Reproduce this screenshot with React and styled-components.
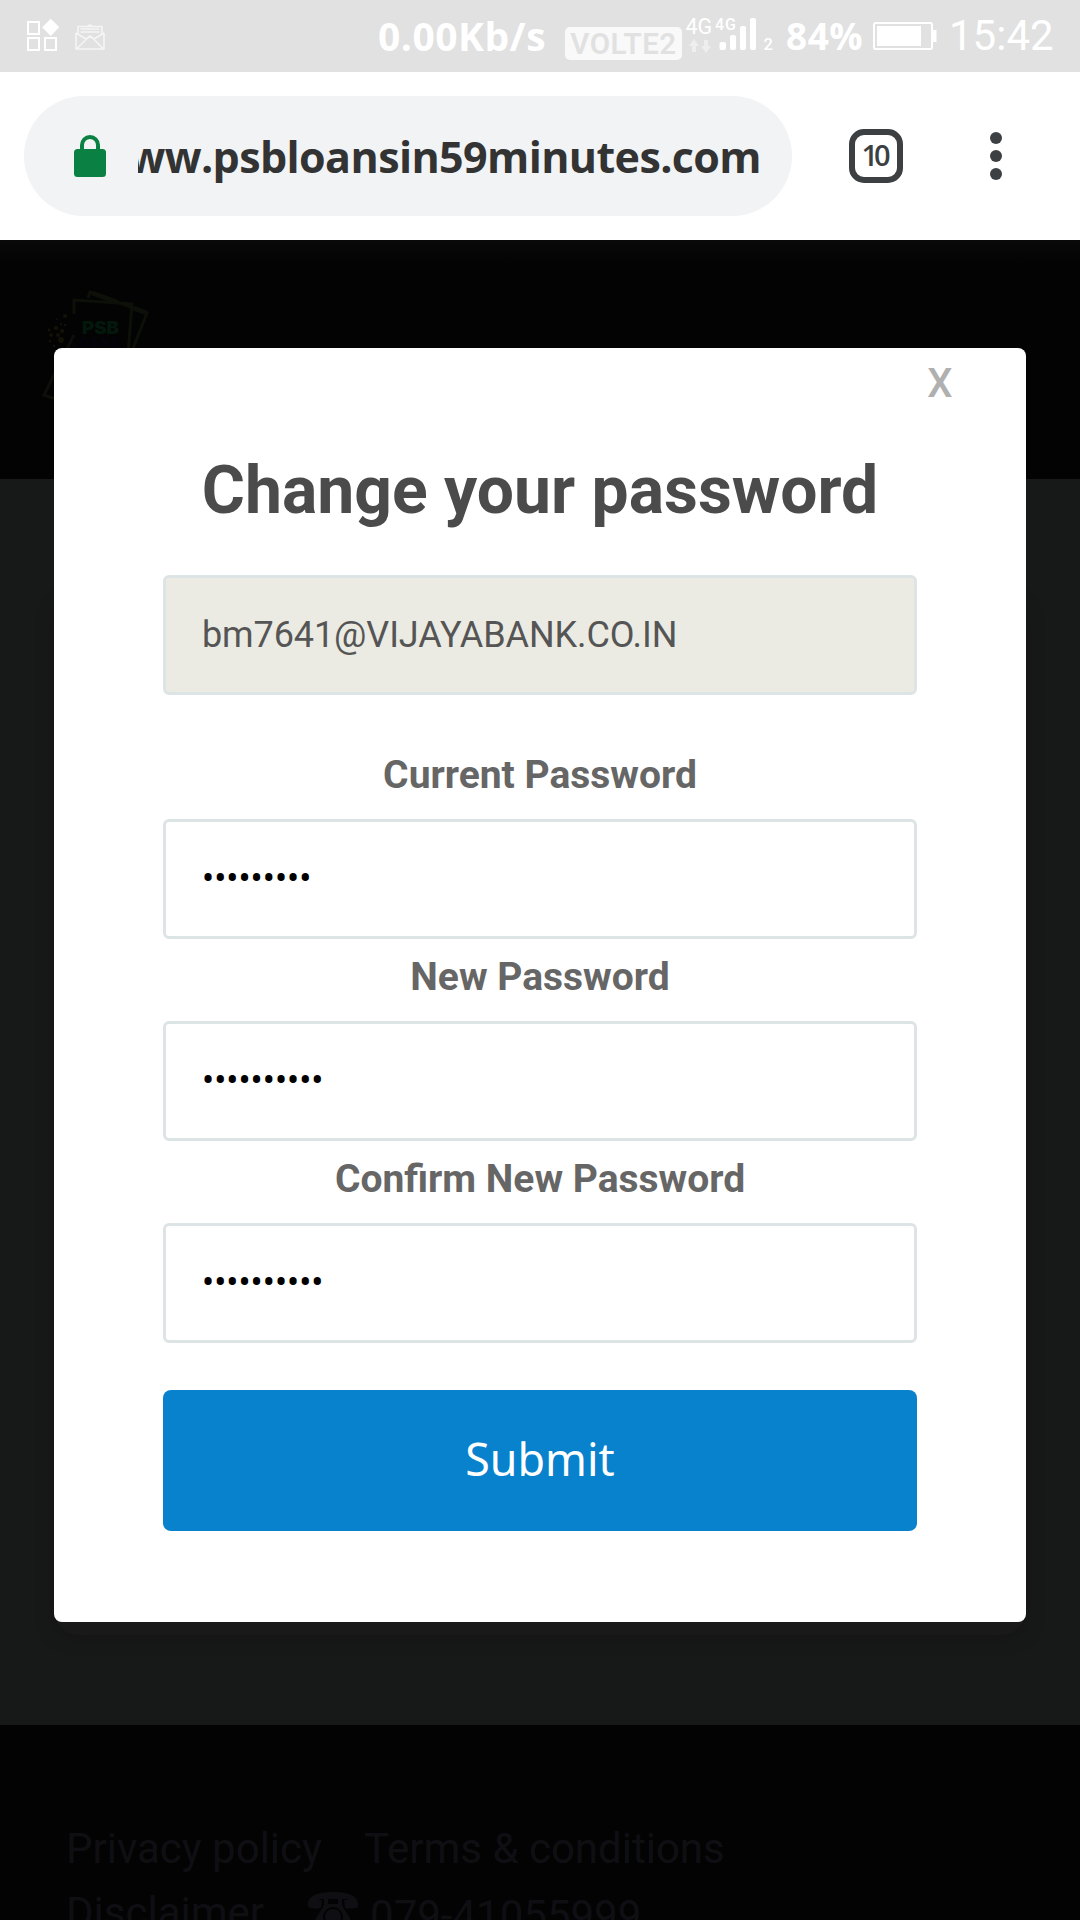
import React from 'react';
import styled, { createGlobalStyle } from 'styled-components';

const GlobalStyle = createGlobalStyle`
  * { box-sizing: border-box; }
  body { margin: 0; background: #030303; font-family: Roboto, sans-serif; }
  svg { overflow: visible; flex: none; }
`;

const Screen = styled.div`
  width: 1080px;
  height: 1920px;
  display: flex;
  flex-direction: column;
  overflow: hidden;
`;

/* status bar */
const StatusBar = styled.header`
  flex: none;
  height: 72px;
  background: #e1e1e1;
  color: #fff;
  display: flex;
  align-items: center;
  justify-content: space-between;
  padding: 0 25px 0 26px;
`;
const StatusGroup = styled.div`
  display: flex;
  align-items: center;
  height: 72px;
`;
const StatusText = styled.span`
  font: 700 ${(p) => p.$size}px/1 'Open Sans', sans-serif;
  letter-spacing: 0.5px;
  width: ${(p) => p.$width}px;
  margin-left: ${(p) => p.$before || 0}px;
  padding-bottom: 2px;
  white-space: nowrap;
`;
const Badge = styled.span`
  width: 117px;
  height: 33px;
  margin: 15px 3px 0 0;
  border-radius: 5px;
  background: #f9f9f9;
  color: #e1e1e1;
  font-size: 29.5px;
  font-weight: 600;
  line-height: 34px;
  text-align: center;
  letter-spacing: 0.5px;
`;
const Clock = styled.span`
  width: 106px;
  margin-left: 11px;
  font-size: 42px;
  line-height: 76px;
  white-space: nowrap;
`;

/* browser bar */
const BrowserBar = styled.div`
  flex: none;
  height: 168px;
  background: #fff;
  display: flex;
  align-items: center;
  padding: 0 78px 0 24px;
`;
const AddressPill = styled.div`
  width: 768px;
  height: 120px;
  border-radius: 60px;
  background: #f1f3f5;
  display: flex;
  align-items: center;
  padding: 0 31px 0 50px;
`;
const UrlText = styled.div`
  flex: 1;
  height: 64px;
  margin-left: 32px;
  display: flex;
  justify-content: flex-end;
  overflow: hidden;
  color: #333;
  font: 700 43px/65px 'Open Sans', sans-serif;
  letter-spacing: -0.6px;
  white-space: nowrap;
`;
const TabCount = styled.div`
  width: 54px;
  height: 54px;
  margin-left: 57px;
  border: 6px solid #3c4043;
  border-radius: 15px;
  color: #3c4043;
  font: 600 29px/39px 'Open Sans', sans-serif;
  letter-spacing: -4px;
  text-indent: -4px;
  text-align: center;
`;
const MenuDots = styled.div`
  display: flex;
  flex-direction: column;
  gap: 6px;
  margin-left: auto;
`;
const Dot = styled.i`
  width: 12px;
  height: 12px;
  border-radius: 50%;
  background: #3c4043;
`;

/* dimmed page */
const Page = styled.main`
  position: relative;
  flex: 1;
  min-height: 0;
  display: flex;
  flex-direction: column;
`;
const PageHeader = styled.div`
  flex: none;
  height: 239px;
  padding: 48px 0 0 40px;
  background: linear-gradient(#090909, #030303 24px);
`;
const PageBody = styled.div`
  flex: none;
  height: 1246px;
  padding: 120px 54px 90px;
  background: #171918;
`;
const PageCard = styled.div`
  height: 100%;
  border-radius: 24px;
  background: #191919;
  box-shadow: 0 2px 12px 6px #161616;
`;
const PageFooter = styled.footer`
  flex: 1;
  min-height: 0;
  overflow: hidden;
  padding: 92px 0 0 66px;
  background: #030303;
  color: #0f0f13;
  font-size: 42px;
  line-height: 64px;
`;
const FooterRow = styled.div`
  display: flex;
  height: 64px;
  gap: ${(p) => p.$gap}px;
`;
const Phone = styled.span`
  display: flex;
  gap: 12px;
  padding-top: 3px;

  svg { margin-top: 8px; }
`;

/* dialog */
const Dialog = styled.section`
  position: absolute;
  top: 108px;
  left: 54px;
  width: 972px;
  height: 1274px;
  padding: 11px 109px 0;
  border-radius: 8px;
  background: #fff;
`;
const CloseButton = styled.button`
  display: block;
  margin: 0 -38px 0 auto;
  padding: 0;
  width: 30px;
  height: 50px;
  border: 0;
  background: none;
  color: #b0b0b0;
  font: 500 40px/50px Roboto, sans-serif;
`;
const Title = styled.h1`
  margin: 42px -40px 44px;
  color: #4b4b4b;
  font-size: 66px;
  font-weight: 700;
  line-height: 80px;
  text-align: center;
`;
const Label = styled.label`
  display: block;
  margin: ${(p) => p.$top}px 0 20px;
  color: #666;
  font-size: 39px;
  font-weight: 700;
  line-height: 48px;
  text-align: center;
`;
const Field = styled.input`
  display: block;
  width: 754px;
  height: 120px;
  padding: 0 36px 1px;
  border: 3px solid #dde4e6;
  border-radius: 6px;
  outline: 0;
  background: ${(p) => (p.disabled ? '#ebebe3' : '#fff')};
  color: ${(p) => (p.disabled ? '#555' : '#000')};
  font: 400 36px Roboto, sans-serif;
  letter-spacing: ${(p) => (p.disabled ? '-0.1px' : '0')};
`;
const Submit = styled.button`
  display: block;
  width: 754px;
  height: 141px;
  margin-top: 47px;
  padding: 0 0 3px;
  border: 0;
  border-radius: 8px;
  background: #0882cc;
  color: #fff;
  font: 400 44.8px/1 'Noto Sans', sans-serif;
`;

const NotificationIcons = () => (
  <svg width="82" height="36" viewBox="26 18 82 36" fill="none">
    <g stroke="#fff" strokeWidth="2">
      <path d="M28 22h11v12H28zM28 38h11v12H28zM45 38h11v12H45z" />
    </g>
    <path d="M50.7 18.8 59.3 27.3 50.7 36 42.2 27.3z" fill="#fff" />
    <g stroke="#f5f5f5" strokeWidth="1.6" strokeLinejoin="round">
      <path d="M78 35V26.500h24V35M76 33v16h28V33M76 33l10 6 4-3 4 3 10-6M76.500 49 87 38.500M103.500 49 93 38.500M80.500 29h19M80.500 32h19M88 26l2-1 2 1" />
    </g>
  </svg>
);

const SignalIcon = () => (
  <svg width="90" height="40" viewBox="685 15 90 40" fill="#fff" fontFamily="Roboto, sans-serif">
    <text x="685.500" y="32.500" fontSize="21.500">4G</text>
    <path fill="#eee" d="M694 38l5 7h-3v6h-4v-6h-3zM706 52l5-7h-3v-6h-4v6h-3z" />
    <text x="715" y="29" fontSize="16" fontWeight="500" textLength="21">4G</text>
    <rect x="719.500" y="41" width="6.500" height="8" rx="2" />
    <rect x="730" y="34" width="6" height="15" rx="2" />
    <rect x="740" y="25" width="6" height="24" rx="2" />
    <rect x="750" y="17" width="6" height="32" rx="2" />
    <text x="763.500" y="49" fontSize="16.500" fontWeight="500">2</text>
  </svg>
);

const BatteryIcon = () => (
  <svg width="65" height="28" viewBox="0 0 65 28">
    <rect x="1" y="1" width="58" height="26" rx="1.500" fill="none" stroke="#fff" strokeWidth="2" />
    <path fill="#fff" d="M4 4h44v20H4zM60 8h3.500v12H60z" />
  </svg>
);

const LockIcon = () => (
  <svg width="32" height="42" viewBox="0 0 32 42">
    <rect y="14" width="32" height="28" rx="3.500" fill="#0b8043" />
    <path d="M8 16v-6a8 8 0 0 1 16 0v6" fill="none" stroke="#0b8043" strokeWidth="4" />
  </svg>
);

const LogoIcon = () => (
  <svg width="112" height="120" viewBox="40 288 112 120" fill="none">
    <g stroke="#0c1008" strokeWidth="3">
      <path d="M88 298l2-6 57 21-17 43M74 314v-14l58 4-4 50M74 335l-30 60 24 8" />
      <path d="M92 293l25 9M133 308l14 5" strokeWidth="5" />
    </g>
    <g fill="#121206">
      <circle cx="65" cy="316" r="2" /><circle cx="56" cy="328" r="2.200" />
      <circle cx="62" cy="331" r="2.200" /><circle cx="49" cy="330" r="1.400" />
      <circle cx="51" cy="335" r="1.800" /><circle cx="58" cy="335" r="2" />
      <circle cx="61" cy="340" r="3" /><circle cx="50" cy="341" r="1.300" />
      <circle cx="54" cy="346" r="1.300" /><circle cx="61" cy="324" r="1.200" />
      <circle cx="65" cy="325" r="1.200" /><circle cx="57" cy="319" r="1" />
    </g>
    <text x="82" y="334" fontFamily="Inter, sans-serif" fontWeight="900" fontSize="17" textLength="37" lengthAdjust="spacingAndGlyphs" fill="#03180c">PSB</text>
    <text x="72" y="347" fontFamily="Inter, sans-serif" fontWeight="500" fontSize="12" textLength="47" fill="#040412">LOANS</text>
  </svg>
);

const PhoneIcon = () => (
  <svg width="50" height="42" viewBox="0 0 50 42" fill="#0f0f13">
    <path d="M0 15C-1 6 5 0 25 0s26 6 25 15c-4 2-9 2-13 1L36 8h3V7h-5v5H34c2 8 9 10 13 30H3C7 22 14 20 16 12V7h-5v1h3l-1 8c-4 1-9 1-13-1zM20 7v5h10V7z" fillRule="evenodd" />
    <circle cx="25" cy="25" r="10" fill="#030303" />
    <circle cx="25" cy="25" r="8" />
  </svg>
);

const PASSWORDS = [
  { label: 'Current Password', value: '*********', top: 56 },
  { label: 'New Password', value: '**********', top: 14 },
  { label: 'Confirm New Password', value: '**********', top: 14 },
];

export default function App() {
  return (
    <Screen>
      <GlobalStyle />
      <StatusBar>
        <NotificationIcons />
        <StatusGroup>
          <StatusText $width={187} $size={39}>0.00Kb/s</StatusText>
          <Badge>VOLTE2</Badge>
          <SignalIcon />
          <StatusText $width={87} $size={37} $before={11}>84%</StatusText>
          <BatteryIcon />
          <Clock>15:42</Clock>
        </StatusGroup>
      </StatusBar>
      <BrowserBar>
        <AddressPill>
          <LockIcon />
          <UrlText>ww.psbloansin59minutes.com</UrlText>
        </AddressPill>
        <TabCount>10</TabCount>
        <MenuDots><Dot /><Dot /><Dot /></MenuDots>
      </BrowserBar>
      <Page>
        <PageHeader><LogoIcon /></PageHeader>
        <PageBody><PageCard /></PageBody>
        <PageFooter>
          <FooterRow $gap={42}>
            <span>Privacy policy</span>
            <span>Terms &amp; conditions</span>
          </FooterRow>
          <FooterRow $gap={44}>
            <span>Disclaimer</span>
            <Phone><PhoneIcon /><span>079-41055999</span></Phone>
          </FooterRow>
        </PageFooter>
        <Dialog>
          <CloseButton>X</CloseButton>
          <Title>Change your password</Title>
          <Field disabled value="bm7641@VIJAYABANK.CO.IN" />
          {PASSWORDS.map(({ label, value, top }) => (
            <React.Fragment key={label}>
              <Label $top={top}>{label}</Label>
              <Field type="password" readOnly value={value} />
            </React.Fragment>
          ))}
          <Submit>Submit</Submit>
        </Dialog>
      </Page>
    </Screen>
  );
}
